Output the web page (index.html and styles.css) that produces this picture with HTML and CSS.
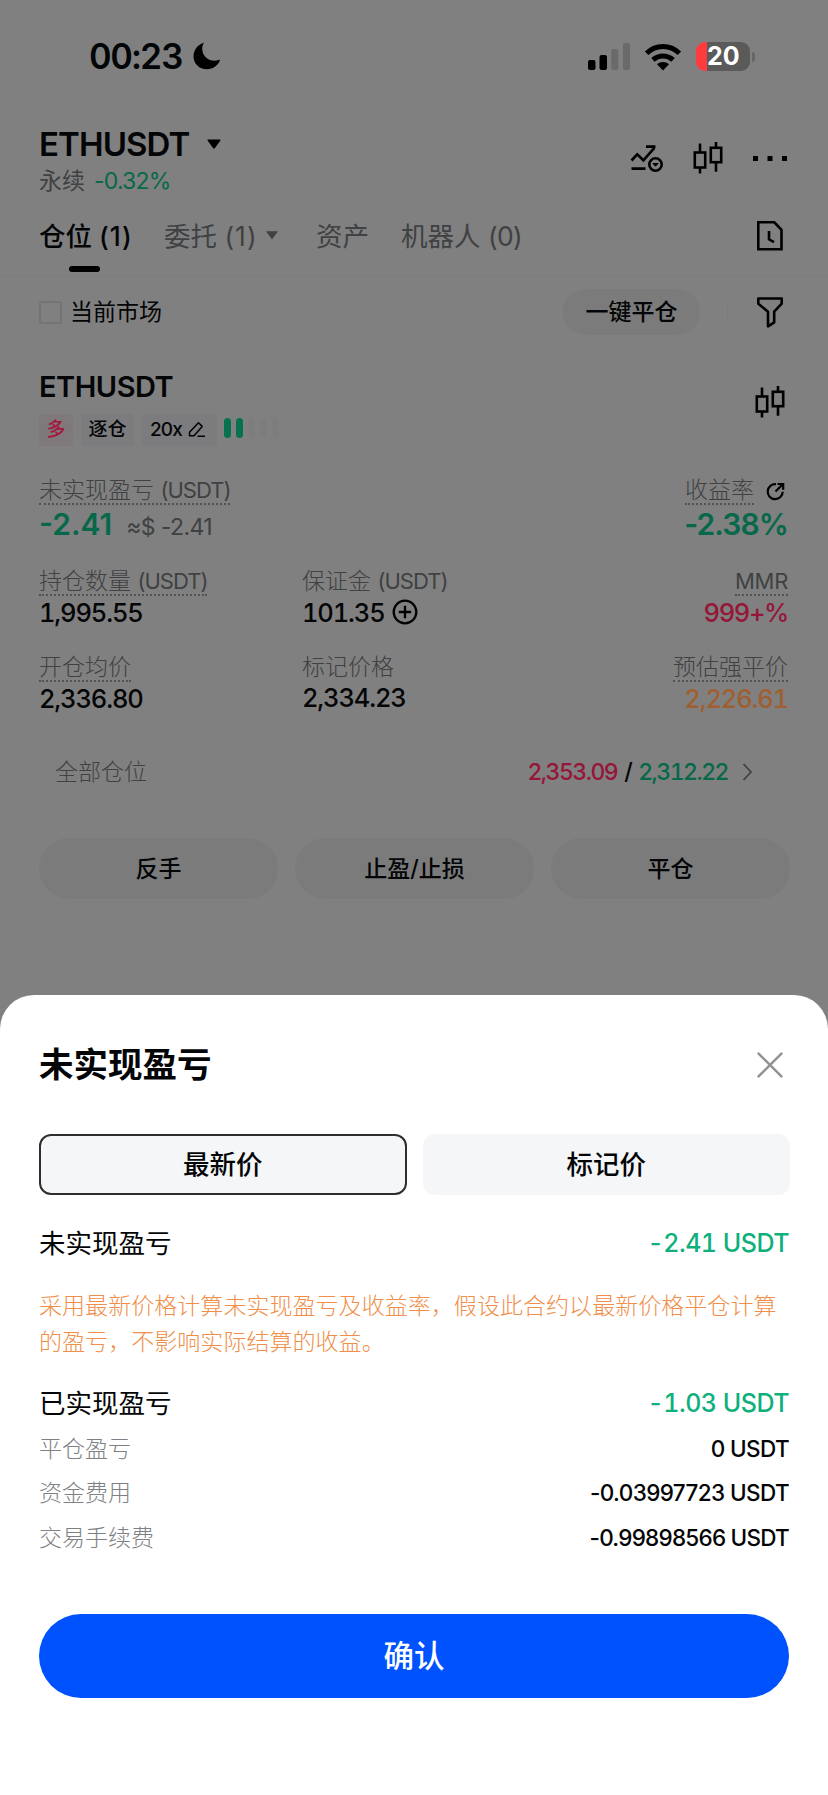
FILE: index.html
```html
<!DOCTYPE html>
<html lang="zh-CN">
<head>
<meta charset="utf-8">
<title>ETHUSDT</title>
<link rel="stylesheet" href="styles.css">
</head>
<body>
<header class="status">
  <span class="time">00:23</span>
  <svg class="moon" width="28" height="28" viewBox="0 0 28 28"><path d="M11 .8C4.800 2.500 .500 8 .500 14.200 .500 21.600 6.400 27.300 13.800 27.300c6.200 0 11.700-4 13.400-9.700-1.700.8-3.300 1.100-5.200 1.100C14.500 18.700 9.200 13.500 9.200 6.400c0-2 .7-4 1.800-5.600z"/></svg>
  <svg class="signal" width="43" height="28" viewBox="0 0 43 28"><rect x="0" y="17" width="7.500" height="10" rx="2"/><rect x="11.500" y="12" width="7.500" height="15" rx="2"/><g fill="#6a6a6a"><rect x="23.300" y="6" width="7" height="21" rx="2"/><rect x="35" y="0" width="7" height="27" rx="2"/></g></svg>
  <svg class="wifi" width="38" height="28" viewBox="0 0 38 28"><path d="M19 27.500l-6-6.200c3.600-3 8.400-3 12 0z"/><g fill="none" stroke="#000" stroke-width="5"><path d="M2.600 10.200c9.300-9 23.500-9 32.800 0"/><path d="M8.900 16.900c5.900-5.300 14.300-5.300 20.200 0"/></g></svg>
  <div class="battery"><span>20</span></div>
  <i class="nub"></i>
</header>

<section class="head">
  <div class="pair">
    <div class="pair-name"><span>ETHUSDT</span><svg width="14" height="10" viewBox="0 0 14 10"><path d="M1 .5h12q1 .3.400 1.100L8 9Q7 10 6 9L.6 1.600Q0 .8 1 .5z"/></svg></div>
    <div class="pair-sub"><span>永续</span><b>-0.32%</b></div>
  </div>
  <div class="tools">
    <svg width="34" height="34" viewBox="0 0 34 34" fill="none" stroke="#000" stroke-width="2.600"><path d="M1.500 19.500l5.700-6.200 6.200 6 11-12.500M16 5.600h9.500M1.500 27.600h14"/><circle cx="25.500" cy="23.500" r="6.200"/><path d="M23 22.500h5l-2.500 2.700z" fill="#000" stroke-width="1"/></svg>
    <svg class="candles" width="30" height="34" viewBox="0 0 30 34"><use href="#candle"/></svg>
    <svg class="dots" width="35" height="5" viewBox="0 0 35 5"><rect width="5" height="5"/><rect x="14.500" width="5" height="5"/><rect x="29" width="5" height="5"/></svg>
  </div>
</section>

<nav class="tabs">
  <a class="tab t1 on">仓位 <span>(1)</span></a>
  <a class="tab t2">委托 <span>(1)</span><svg width="12" height="9" viewBox="0 0 12 9"><path d="M0 .3h12L6 8.500z" fill="#3f4142"/></svg></a>
  <a class="tab t3">资产</a>
  <a class="tab t4">机器人 <span>(0)</span></a>
  <svg class="end" width="28" height="32" viewBox="0 0 28 32" fill="none" stroke="#000" stroke-width="2.600"><path d="M2.300 2.300h16l7.200 7.500v19.500H2.300z"/><path d="M13 11v8.300l5 2.800"/></svg>
</nav>

<section class="filter">
  <i class="check"></i><span class="market">当前市场</span>
  <span class="pill">一键平仓</span><i class="vline"></i>
  <svg width="28" height="32" viewBox="0 0 28 32" fill="none" stroke="#000" stroke-width="2.600" stroke-linejoin="round"><path d="M2.300 2.500h23.400v5.200l-7.500 8v10.600l-6.200 4V15.700l-9.700-8z"/></svg>
</section>

<section class="pos">
  <div>
    <div class="pos-name">ETHUSDT</div>
    <div class="badges">
      <span class="badge long">多</span><span class="badge iso">逐仓</span>
      <span class="badge lev"><span>20x</span><svg width="18" height="17" viewBox="0 0 18 17" fill="none" stroke="#000" stroke-width="1.500" stroke-linejoin="round"><path d="M1.500 11.200L10.500 1.700l3.700 3.700L6 14.700H1.500zM9.500 15.200h7.500"/></svg></span>
      <span class="risk"><i class="g"></i><i class="g"></i><i></i><i></i><i></i></span>
    </div>
  </div>
  <svg class="candles2" width="30" height="34" viewBox="0 0 30 34"><g id="candle" fill="none" stroke="#000" stroke-width="2.600"><rect x="1.800" y="11.500" width="10.400" height="15"/><path d="M7 11.500V2.500M7 26.500v6"/><rect x="17.800" y="6.800" width="10.400" height="14.400"/><path d="M23 6.800V1M23 21.200v9.600"/></g></svg>
</section>

<section class="metrics">
  <div class="m wide"><span class="lab dot">未实现盈亏 <em>(USDT)</em></span><div class="val big"><span class="green pnl">-2.41</span><span class="approx">≈$ -2.41</span></div></div>
  <div class="m right"><div class="labrow"><span class="lab dot">收益率</span><svg width="19" height="19" viewBox="0 0 19 19" fill="none" stroke="#000" stroke-width="2.200"><path d="M10 2.200A7.500 7.500 0 1 0 16.700 9.700M9.500 9.500L16.500 2.500M11.500 2h5.700v5.700"/></svg></div><div class="val big green roi">-2.38%</div></div>
  <div class="m"><span class="lab dot">持仓数量 <em>(USDT)</em></span><div class="val">1,995.55</div></div>
  <div class="m"><span class="lab">保证金 <em>(USDT)</em></span><div class="val"><span>101.35</span><svg width="26" height="26" viewBox="0 0 26 26" fill="none" stroke="#000" stroke-width="2.300"><circle cx="13" cy="13" r="11.300"/><path d="M13 6.800v12.400M6.800 13h12.400"/></svg></div></div>
  <div class="m right"><span class="lab dot"><em class="abbr">MMR</em></span><div class="val red mmr">999+%</div></div>
  <div class="m"><span class="lab dot">开仓均价</span><div class="val">2,336.80</div></div>
  <div class="m"><span class="lab">标记价格</span><div class="val">2,334.23</div></div>
  <div class="m right"><span class="lab dot">预估强平价</span><div class="val orange">2,226.61</div></div>
</section>

<section class="tpsl">
  <span class="lab">全部仓位</span>
  <span class="prices"><span class="red">2,353.09</span><span>/</span><span class="green">2,312.22</span></span>
  <svg width="11" height="18" viewBox="0 0 11 18" fill="none" stroke="#3f4142" stroke-width="1.800"><path d="M1.500 1l7.500 8-7.500 8"/></svg>
</section>

<section class="actions"><button>反手</button><button>止盈/止损</button><button>平仓</button></section>

<main class="sheet">
  <div class="sheet-head"><h1>未实现盈亏</h1><svg width="28" height="28" viewBox="0 0 28 28" stroke="#919293" stroke-width="2.400"><path d="M1.800 1.800l24.400 24.400M26.200 1.800L1.800 26.200"/></svg></div>
  <div class="seg"><span class="on">最新价</span><span>标记价</span></div>
  <div class="row main first"><span>未实现盈亏</span><b>-2.41 USDT</b></div>
  <p class="note">采用最新价格计算未实现盈亏及收益率，假设此合约以最新价格平仓计算的盈亏，不影响实际结算的收益。</p>
  <div class="row main"><span>已实现盈亏</span><b>-1.03 USDT</b></div>
  <div class="row sub"><span>平仓盈亏</span><b>0 USDT</b></div>
  <div class="row sub"><span>资金费用</span><b>-0.03997723 USDT</b></div>
  <div class="row sub"><span>交易手续费</span><b class="tight">-0.99898566 USDT</b></div>
  <button class="ok">确认</button>
</main>
</body>
</html>
```
FILE: styles.css
```css
* { box-sizing: border-box; margin: 0; padding: 0; }
body { width: 828px; height: 1795px; background: #808080; color: #040506; font-family: Inter, "Noto Sans CJK SC", sans-serif; font-size: 23px; line-height: 26px; white-space: nowrap; overflow: hidden; }
svg { display: block; flex: none; }
em, i { font-style: normal; }
button { font: inherit; border: 0; color: inherit; }
.green { color: #07684a; }
.red { color: #951638; }
.orange { color: #9f5f31; }

.status { height: 113px; display: flex; align-items: center; padding-left: 89px; }
.time { width: 104px; margin-top: -1px; font-size: 35px; font-weight: 600; line-height: 40px; letter-spacing: -1.3px; font-variant-numeric: tabular-nums; }
.moon { margin-top: -1px; }
.signal { margin-left: 367px; }
.wifi { margin-left: 13px; }
.battery { width: 54px; height: 29px; margin-left: 14px; margin-top: -1px; border-radius: 9px; background: linear-gradient(90deg, #ff3b3d 11px, #5a5a5a 11px); color: #fff; font-size: 25px; font-weight: 700; line-height: 29px; padding-left: 11px; }
.nub { width: 3px; height: 10px; margin-left: 2px; border-radius: 0 3px 3px 0; background: #666; }

.head { height: 81px; padding: 12px 45px 0 39px; display: flex; justify-content: space-between; align-items: flex-start; }
.pair-name { display: flex; align-items: center; height: 38px; gap: 18px; font-size: 33px; font-weight: 600; letter-spacing: -.9px; }
.pair-sub { display: flex; height: 26px; margin-top: 5px; gap: 9px; color: #3f4142; }
.pair-sub b { font-weight: 400; color: #07684a; letter-spacing: -.8px; }
.tools { display: flex; align-items: center; margin-top: 16px; height: 34px; }
.tools .candles { margin-left: 29px; }
.tools .dots { margin-left: 30px; margin-right: -5px; }

.tabs { height: 83px; display: flex; align-items: center; padding: 1px 44px 0 39px; border-bottom: 1px solid #7c7c7c; font-size: 26.5px; line-height: 32px; color: #3f4142; }
.tab { position: relative; display: flex; align-items: center; white-space: pre; }
.tab span { letter-spacing: 1px; }
.tab.on { color: #040506; font-weight: 500; }
.tab.on::after { content: ""; position: absolute; left: 30px; bottom: -20px; width: 31px; height: 6px; border-radius: 3px; background: #000; }
.t1 { width: 125px; }
.t2 { width: 152px; }
.t2 svg { margin-left: 8px; }
.t3 { width: 85px; }
.tab.t4 span { letter-spacing: -.7px; }
.end { margin-left: auto; }

.filter { height: 70px; display: flex; align-items: center; padding: 0 44px 0 39px; }
.check { width: 23px; height: 23px; border: 2px solid #747474; border-radius: 2px; }
.market { margin-left: 8px; }
.pill { margin-left: auto; width: 137px; height: 46px; border-radius: 23px; background: #7b7b7b; line-height: 46px; text-align: center; font-weight: 500; }
.vline { width: 1px; height: 20px; background: #7c7c7c; margin: 0 28px 0 27px; }

.pos { height: 99px; padding: 22px 43px 0 39px; display: flex; justify-content: space-between; }
.pos-name { height: 35px; font-size: 29px; font-weight: 600; line-height: 35px; letter-spacing: -.5px; }
.badges { display: flex; height: 32px; margin-top: 10px; gap: 8px; font-size: 19px; line-height: 32px; }
.badge { background: #7c7c7e; border-radius: 3px; text-align: center; font-weight: 500; }
.long { width: 34px; background: #80797b; color: #a3183e; }
.iso { width: 53px; }
.lev { width: 75px; display: flex; align-items: center; padding-left: 8px; gap: 6px; letter-spacing: -.9px; }
.lev svg { margin-top: -2px; }
.risk { display: flex; gap: 5px; margin: 4px 0 0 -1px; }
.risk i { width: 7px; height: 20px; border-radius: 4px; background: #7d7d7d; }
.risk i.g { background: #07724f; }
.candles2 { margin-top: 16px; }

.metrics { margin: 31px 40px 0 39px; display: grid; grid-template-columns: 263px 263px 1fr; grid-template-rows: 91px 86px 57px; }
.wide { grid-column: span 2; }
.m { display: flex; flex-direction: column; align-items: flex-start; }
.right { align-items: flex-end; }
.lab { color: #3f4142; height: 28px; font-weight: 300; white-space: pre; }
.lab em { font-size: 22px; font-weight: 400; letter-spacing: -1px; }
.lab .abbr { letter-spacing: -.3px; }
.dot { border-bottom: 2px dotted #515253; }
.labrow { display: flex; gap: 12px; }
.labrow svg { margin: 5px 3px 0 0; }
.val { display: flex; align-items: center; height: 26px; margin-top: 4px; font-size: 25.5px; font-weight: 500; letter-spacing: -1.15px; font-variant-numeric: tabular-nums; }
.val svg { margin-left: 7px; margin-top: -2px; }
.mmr { letter-spacing: -1.4px; }
.big { height: 36px; margin-top: 1px; font-size: 30px; font-weight: 600; align-items: baseline; line-height: 36px; letter-spacing: 0; font-variant-numeric: normal; }
.roi { letter-spacing: -.9px; }
.approx { font-size: 23px; font-weight: 400; color: #3f4142; margin-left: 14px; letter-spacing: -.6px; }

.tpsl { height: 122px; margin: 0 75px 5px 55px; display: flex; align-items: center; justify-content: space-between; }
.tpsl .lab { height: 26px; }
.prices { margin-left: auto; display: flex; gap: 7px; font-weight: 500; margin-right: 14px; letter-spacing: -1.5px; font-variant-numeric: tabular-nums; }

.actions { display: flex; gap: 17px; padding: 0 38px 0 39px; }
.actions button { flex: 1; height: 61px; border-radius: 30.5px; background: #7b7b7b; font-weight: 500; }

.sheet { margin-top: 96px; height: 800px; padding: 0 39px; background: #fff; border-radius: 34px 34px 0 0; }
.sheet-head { height: 139px; display: flex; align-items: center; justify-content: space-between; padding-right: 5px; }
h1 { font-size: 34.5px; line-height: 40px; font-weight: 700; }
.seg { display: grid; grid-template-columns: 1fr 1fr; gap: 16px; margin-right: -1px; }
.seg span { height: 61px; border-radius: 12px; background: #f4f6f8; text-align: center; line-height: 61px; font-size: 26.5px; font-weight: 500; }
.seg .on { border: 2px solid #2d2e30; line-height: 57px; }
.row { display: flex; align-items: center; justify-content: space-between; }
.row b { font-weight: 500; }
.main { height: 48px; font-size: 26.5px; }
.main b { color: #0fb07c; font-size: 25px; font-variant-numeric: tabular-nums; letter-spacing: -.5px; }
.first { margin-top: 24px; }
.note { margin: 21px 0 19px; color: #f08f4b; font-size: 23.05px; line-height: 36px; white-space: normal; font-weight: 300; width: 745px; }
.sub { height: 44.3px; }
.sub span { color: #7e8184; font-weight: 300; }
.sub b { font-size: 22.5px; letter-spacing: -.6px; }
.sub .tight { letter-spacing: -.75px; }
.ok { display: block; width: 750px; height: 84px; margin-top: 54px; border-radius: 42px; background: #0052ff; color: #fff; font-size: 30.5px; font-weight: 500; }
```
